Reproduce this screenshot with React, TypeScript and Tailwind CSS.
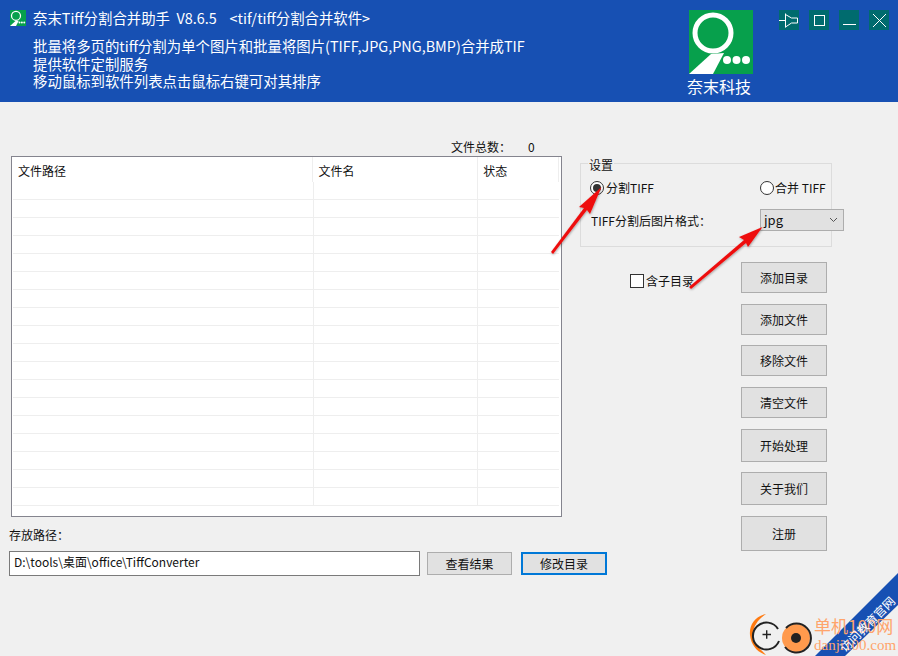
const fileRows = Array.from({ length: 18 }, (_, i) => i);
const actions = [
  { label: "添加目录", cls: "h-[31px]" },
  { label: "添加文件", cls: "mt-[11px] h-[31px]" },
  { label: "移除文件", cls: "mt-[10px] h-[31px]" },
  { label: "清空文件", cls: "mt-[11px] h-[31px]" },
  { label: "开始处理", cls: "mt-[11px] h-[33px]" },
  { label: "关于我们", cls: "mt-[10px] h-[33px]" },
  { label: "注册", cls: "mt-[11px] h-[35px]" },
];

function WindowButtons() {
  return (
    <div className="flex gap-[10px] pt-[10px]">
      <button className="flex h-5 w-5 items-center justify-center bg-[#006b6e]">
        <svg width="20" height="20" viewBox="0 0 20 20" fill="none" stroke="white">
          <path d="M0 10.5h6M6.5 3.5v14M6.5 4.5l6 3.5h6v5h-6l-6 4" />
        </svg>
      </button>
      <button className="flex h-5 w-5 items-center justify-center bg-[#006b6e]">
        <svg width="20" height="20" viewBox="0 0 20 20" fill="none" stroke="white">
          <rect x="5.5" y="5.5" width="10" height="10" />
        </svg>
      </button>
      <button className="flex h-5 w-5 items-center justify-center bg-[#006b6e]">
        <svg width="20" height="20" viewBox="0 0 20 20" fill="none" stroke="white">
          <path d="M4 14.5h13" />
        </svg>
      </button>
      <button className="flex h-5 w-5 items-center justify-center bg-[#006b6e]">
        <svg width="20" height="20" viewBox="0 0 20 20" fill="none" stroke="white">
          <path d="M4 4l13 13M17 4L4 17" />
        </svg>
      </button>
    </div>
  );
}

function NineLogo({ size }: { size: number }) {
  return (
    <svg width={size} height={size} viewBox="0 0 64 64" className="shrink-0">
      <rect width="64" height="64" fill="#07a04c" />
      <circle cx="24" cy="23" r="18" fill="none" stroke="white" strokeWidth="5" />
      <path d="M0 64 L22 44 L35 43 L24 64 Z" fill="white" />
      <circle cx="38" cy="50" r="4" fill="white" />
      <circle cx="47.5" cy="50" r="4" fill="white" />
      <circle cx="57" cy="50" r="4" fill="white" />
    </svg>
  );
}

function Header() {
  return (
    <header className="flex h-[102px] bg-[#1750b3] text-white">
      <div className="w-[689px] pl-[10px] pt-[8px]">
        <div className="flex h-[19px] items-center gap-[7px] text-[14.4px]">
          <NineLogo size={16} />
          <span className="whitespace-pre">奈末Tiff分割合并助手  V8.6.5    &lt;tif/tiff分割合并软件&gt;</span>
        </div>
        <div className="pl-[23px] pt-[10px] text-[14.4px] leading-[17.5px]">
          <p>批量将多页的tiff分割为单个图片和批量将图片(TIFF,JPG,PNG,BMP)合并成TIF</p>
          <p>提供软件定制服务</p>
          <p>移动鼠标到软件列表点击鼠标右键可对其排序</p>
        </div>
      </div>
      <div className="w-[90px] pt-[10px]">
        <NineLogo size={64} />
        <p className="-ml-[2px] mt-[2px] w-16 whitespace-nowrap text-center text-[16px] leading-5">奈末科技</p>
      </div>
      <WindowButtons />
    </header>
  );
}

function FileTable() {
  return (
    <div className="h-[361px] w-[551px] overflow-hidden border border-[#84848e] bg-white pl-px pr-[2px]">
      <div className="flex h-[25px] items-center text-[12px] text-[#111]">
        <div className="h-full w-[301px] border-r border-[#eeeeee] pl-[5px] leading-[28px]">文件路径</div>
        <div className="h-full w-[165px] border-r border-[#eeeeee] pl-[5px] leading-[28px]">文件名</div>
        <div className="h-full w-[81px] border-r border-[#eeeeee] pl-[5px] leading-[28px]">状态</div>
      </div>
      {fileRows.map((row) => (
        <div key={row} className="flex h-[18px] border-b border-[#eeeeee]">
          <div className="w-[302px] border-r border-[#eeeeee]" />
          <div className="w-[164px] border-r border-[#eeeeee]" />
          <div className="w-[81px]" />
        </div>
      ))}
    </div>
  );
}

function LeftPane() {
  return (
    <div className="w-[569px] shrink-0 pl-[11px] pt-[35px]">
      <div className="flex h-[19px] items-center pl-[440px] text-[12px]">
        <span>文件总数：</span>
        <span className="ml-[17px]">0</span>
      </div>
      <FileTable />
      <p className="-ml-[2px] mt-[9px] h-[17px] text-[12px] leading-[17px]">存放路径：</p>
      <div className="-ml-[2px] mt-[8px] flex w-[598px] items-center">
        <div className="flex h-[25px] w-[411px] shrink-0 items-center border border-[#7a7a7a] bg-white pb-[4px] pl-[4px] text-[12px]">
          D:\tools\桌面\office\TiffConverter
        </div>
        <button className="ml-[7px] h-[23px] w-[85px] shrink-0 border border-[#adadad] bg-[#e1e1e1] text-[12px]">查看结果</button>
        <button className="ml-[9px] h-[23px] w-[86px] shrink-0 border-2 border-[#0078d7] bg-[#e1e1e1] text-[12px]">修改目录</button>
      </div>
    </div>
  );
}

function SettingsGroup() {
  return (
    <div className="relative h-[84px] w-[252px] border border-[#dcdcdc] text-[12px]">
      <span className="absolute -top-[7px] left-[7px] bg-[#f0f0f0] px-px leading-[15px]">设置</span>
      <div className="mt-[15px] flex h-[18px] items-center pl-[9px]">
        <span className="flex h-[14px] w-[14px] items-center justify-center rounded-full border border-[#333] bg-white">
          <span className="h-2 w-2 rounded-full bg-[#333]" />
        </span>
        <span className="ml-[2px] w-[154px]">分割TIFF</span>
        <span className="h-[14px] w-[14px] rounded-full border border-[#333] bg-white" />
        <span className="ml-[1px] whitespace-nowrap">合并 TIFF</span>
      </div>
      <div className="mt-[12px] flex items-center pl-[10px]">
        <span className="w-[169px] shrink-0 pt-[2px]">TIFF分割后图片格式：</span>
        <div className="flex h-[22px] w-[84px] shrink-0 items-center justify-between border border-[#adadad] bg-[#e1e1e1] pl-[3px] pr-[5px] text-[13px]">
          jpg
          <svg width="9" height="6" viewBox="0 0 9 6" fill="none" stroke="#555">
            <path d="M1 1l3.5 3.5L8 1" />
          </svg>
        </div>
      </div>
    </div>
  );
}

function RightPane() {
  return (
    <div className="flex-1 pl-[11px] pt-[61px] text-[12px]">
      <SettingsGroup />
      <div className="mt-[15px] flex">
        <div className="ml-[50px] flex h-[26px] w-[111px] items-end gap-[2px]">
          <span className="h-[14px] w-[14px] border border-[#333] bg-white" />
          <span className="leading-[14px]">含子目录</span>
        </div>
        <div>
          {actions.map((a) => (
            <button key={a.label} className={`block w-[86px] border border-[#adadad] bg-[#e1e1e1] ${a.cls}`}>
              {a.label}
            </button>
          ))}
        </div>
      </div>
    </div>
  );
}

// red callouts pointing at the split option and the output format
function Callouts() {
  return (
    <svg className="pointer-events-none absolute left-0 top-0" width="898" height="656" viewBox="0 0 898 656">
      <defs>
        <filter id="arrowShadow" x="-20%" y="-20%" width="140%" height="140%">
          <feDropShadow dx="0.5" dy="1" stdDeviation="1" floodColor="#000" floodOpacity="0.35" />
        </filter>
      </defs>
      <g fill="#ee1111" filter="url(#arrowShadow)">
        <path d="M551 252 L584 208 L579 207 L601.5 187 L590 214 L587 210 L553 254 Z" />
        <path d="M689 287 L744 240 L739 237 L762.5 227 L748 247 L746 243 L691 289 Z" />
      </g>
    </svg>
  );
}

function SiteBadge() {
  return (
    <div className="pointer-events-none absolute bottom-0 right-0 h-[86px] w-[160px]">
      <svg className="absolute left-[2px] top-[35px]" width="72" height="51" viewBox="0 0 72 51">
        <path d="M26 9 C15 11 9 20 10 30 C11 40 17 47 26 50 C21 44 13 40 13 30 C13 20 19 14 26 9 Z" fill="#ff7a10" />
        <path d="M38 24 A13.5 13.5 0 1 0 39 36" fill="none" stroke="#222" strokeWidth="2" />
        <path d="M22.5 29.5h8.5M26.7 25.3v8.5" stroke="#222" strokeWidth="1.4" />
        <circle cx="56" cy="33" r="14" fill="#ff9a4d" />
        <path d="M46 23 A14.5 14.5 0 1 1 45 42" fill="none" stroke="#222" strokeWidth="2" />
        <circle cx="56" cy="33" r="5" fill="#222" />
      </svg>
      <div className="absolute bottom-0 right-0 h-[86px] w-[84px] bg-[#1750b3] [clip-path:polygon(84px_3px,84px_35px,31px_86px,1px_86px)]" />
      <div className="absolute left-[76px] top-[44px] whitespace-nowrap text-[17px] leading-[24px] text-[#ffa46b]">
        单机100网
      </div>
      <div className="absolute left-[76px] top-[66px] whitespace-nowrap font-['Liberation_Serif',serif] text-[15px] leading-[18px] text-[#ffa46b]">
        danji100.com
      </div>
      <div className="absolute left-[89px] top-[46px] h-4 w-[80px] -rotate-45 whitespace-nowrap text-center text-[12px] leading-4 text-white">
        访问教育官网
      </div>
    </div>
  );
}

export default function App() {
  return (
    <div className="relative h-[656px] w-[898px] overflow-hidden bg-[#f0f0f0] font-['Noto_Sans_CJK_SC','Noto_Sans',sans-serif] text-[#111]">
      <Header />
      <div className="flex">
        <LeftPane />
        <RightPane />
      </div>
      <Callouts />
      <SiteBadge />
    </div>
  );
}
